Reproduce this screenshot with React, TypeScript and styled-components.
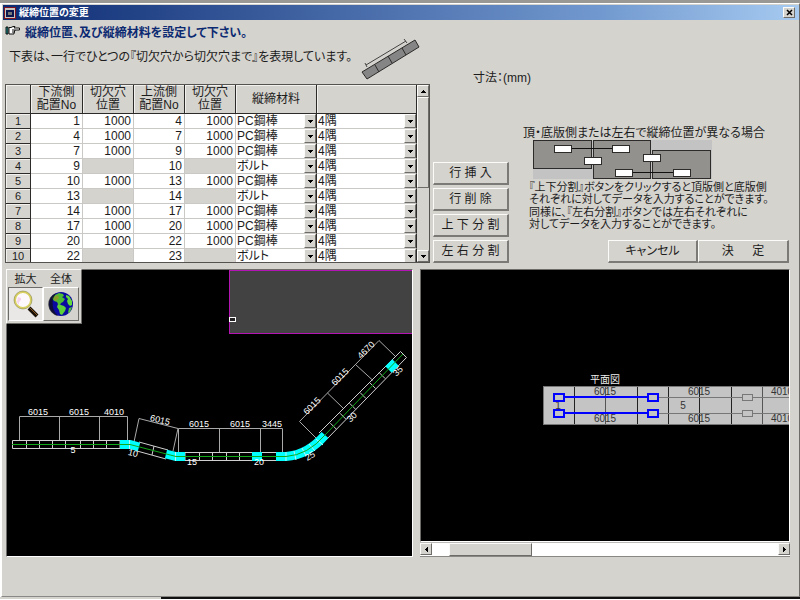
import React, { useState } from "react";
import styled, { createGlobalStyle, css } from "styled-components";

const face = "#d5d3ce";
const ink = "#1c1c1c";

const GlobalStyle = createGlobalStyle`
  *, *::before, *::after { box-sizing: border-box; }
  body {
    margin: 0;
    background: ${face};
    color: ${ink};
    font-family: "Liberation Sans", "Noto Sans CJK JP", sans-serif;
    font-size: 12px;
    font-feature-settings: "palt";
  }
  button, select { font: inherit; color: inherit; font-feature-settings: inherit; }
`;

const raised = css`
  border: 1px solid;
  border-color: #fbfbf9 #6e6c69 #6e6c69 #fbfbf9;
  background: ${face};
`;

const Screen = styled.div`
  min-height: 100vh;
  display: flex;
  flex-direction: column;
  background: #fff;
  border-top: 3px solid #9a9894;
`;

const Dialog = styled.main`
  flex: 1;
  display: flex;
  flex-direction: column;
  margin-left: 1px;
  padding: 1px 0 0 1px;
  background: ${face};
  border: 1px solid;
  border-color: #fff #6e6c69 #8a8884 #fff;
`;

const TitleBar = styled.header`
  display: flex;
  align-items: center;
  gap: 2px;
  height: 15px;
  padding: 0 4px 0 0;
  background: linear-gradient(90deg, #0c2a72, #7299cf 75%, #a6caf0);
  color: #fff;
`;

const Title = styled.h1`
  flex: 1;
  margin: 0;
  font-size: 10px;
  line-height: 15px;
  font-weight: 700;
`;

const CloseButton = styled.button`
  ${raised}
  display: grid;
  place-items: center;
  width: 12px;
  height: 11px;
  padding: 0;
`;

const TopArea = styled.div`
  display: flex;
  padding: 0 10px 6px 2px;
`;

const TableSide = styled.section`
  flex: none;
  width: 425px;
`;

const Intro = styled.div`
  display: grid;
  grid-template-columns: 356px 60px;
  grid-template-rows: 22px 30px;
  padding-bottom: 12px;
`;

const Heading = styled.h2`
  display: flex;
  align-items: center;
  gap: 4px;
  margin: 0;
  font-size: 12px;
  font-weight: 700;
  color: #0c2a72;
  white-space: nowrap;
`;

const Lead = styled.p`
  grid-column: 1;
  margin: 0;
  padding-left: 4px;
  line-height: 30px;
  white-space: nowrap;
`;

const BarSketch = styled.svg`
  grid-area: 1 / 2 / 3 / 3;
  width: 60px;
  height: 44px;
  align-self: end;
  margin-bottom: -10px;
`;

const GridFrame = styled.div`
  display: flex;
  height: 179px;
  overflow: hidden;
  border: 1px solid #55534f;
  background: ${face};
`;

const Table = styled.table`
  flex: none;
  width: 411px;
  height: 100%;
  border-collapse: separate;
  border-spacing: 0;
  table-layout: fixed;
`;

const Col = styled.col<{ $w: number }>`
  width: ${(p) => p.$w}px;
`;

const HeadCell = styled.th`
  height: 29px;
  padding: 0;
  font-weight: 400;
  line-height: 13px;
  background: ${face};
  border: solid #2c2b29;
  border-width: 0 1px 1px 0;
  box-shadow: inset 1px 1px 0 #f2f1ee;
`;

const RowHead = styled.th`
  height: 15px;
  padding: 0;
  font-size: 11px;
  font-weight: 400;
  line-height: 14px;
  background: ${face};
  border: solid #2c2b29;
  border-width: 0 1px 1px 0;
  box-shadow: inset 1px 1px 0 #f2f1ee;
`;

const Cell = styled.td<{ $off?: boolean }>`
  height: 15px;
  padding: 0 2px 0 0;
  line-height: 14px;
  text-align: right;
  background: ${(p) => (p.$off ? face : "#fff")};
  border: solid #cbc9c5;
  border-width: 0 1px 1px 0;
`;

const PickCell = styled.td`
  height: 15px;
  padding: 0;
  background: #fff;
  border: solid;
  border-width: 0 1px 1px 0;
  border-color: #cbc9c5 #2c2b29;
`;

const PickBox = styled.div`
  display: grid;
  align-items: center;
  height: 14px;
`;

const Pick = styled.select`
  grid-area: 1 / 1;
  appearance: none;
  width: 100%;
  height: 14px;
  padding: 0 14px 0 1px;
  border: 0;
  border-radius: 0;
  background: #fff;
  line-height: 14px;
`;

const PickArrow = styled.span`
  ${raised}
  grid-area: 1 / 1;
  justify-self: end;
  display: grid;
  place-items: center;
  width: 12px;
  height: 14px;
  pointer-events: none;
`;

const ScrollY = styled.div`
  flex: 1;
  display: flex;
  flex-direction: column;
  background: ${face};
`;

const ScrollX = styled.div`
  display: flex;
  height: 15px;
  background: #fff;
  border-bottom: 1px solid #8a8884;
  border-top: 1px solid #bdb9b6;
`;

const ScrollButton = styled.button`
  ${raised}
  flex: none;
  display: grid;
  place-items: center;
  width: 12px;
  height: 12px;
  padding: 0;
`;

const ThumbY = styled.div`
  ${raised}
  height: 91px;
`;

const ThumbX = styled.div`
  ${raised}
  width: 83px;
  margin-left: 17px;
`;

const Fill = styled.div`
  flex: 1;
`;

const ControlSide = styled.section`
  flex: 1;
  display: flex;
  flex-direction: column;
  justify-content: space-between;
  padding: 49px 0 0 3px;
`;

const Unit = styled.p`
  margin: 0;
  padding-left: 40px;
  line-height: 18px;
`;

const Controls = styled.div`
  display: flex;
  gap: 14px;
  align-items: flex-end;
`;

const RowActions = styled.div`
  display: grid;
  flex: none;
  gap: 3px;
  width: 76px;
`;

const PushButton = styled.button`
  height: 23px;
  padding: 0;
  border: 2px solid;
  border-width: 1px 2px 2px 1px;
  border-color: #fbfbf9 #7c7a77 #7c7a77 #fbfbf9;
  background: ${face};
  line-height: 18px;
  white-space: pre;
`;

const Info = styled.div`
  flex: 1;
`;

const InfoTitle = styled.h3`
  margin: 0;
  font-size: 12px;
  font-weight: 400;
  line-height: 14px;
  white-space: nowrap;
`;

const InfoArt = styled.svg`
  display: block;
  width: 179px;
  height: 40px;
  margin-left: 10px;
`;

const InfoText = styled.p`
  margin: 1px 0 0;
  padding-left: 6px;
  font-size: 11px;
  line-height: 12px;
  white-space: nowrap;
`;

const Decide = styled.div`
  display: grid;
  grid-template-columns: 90px 91px;
  justify-content: end;
  padding-top: 10px;
`;

const Workspace = styled.div`
  flex: 1;
  display: grid;
  grid-template-columns: 407fr 370fr;
  gap: 7px;
  padding: 0 9px 39px 3px;
`;

const Pane = styled.section`
  position: relative;
  display: flex;
  flex-direction: column;
  min-width: 0;
`;

const Canvas = styled.svg`
  flex: 1;
  display: block;
  width: 100%;
  min-height: 260px;
  background: #000;
  border: 1px solid;
  border-color: #6e6c69 #fff #fff #6e6c69;
  font-size: 9px;
`;

const Tools = styled.div`
  ${raised}
  position: absolute;
  top: 0;
  left: 0;
  display: grid;
  grid-template-columns: 35px 36px;
  grid-template-rows: 16px 34px;
  padding: 1px 2px 2px 1px;
  text-align: center;
`;

const ToolLabel = styled.label`
  font-size: 11px;
  line-height: 16px;
`;

const ToolButton = styled.button<{ $down?: boolean }>`
  display: grid;
  place-items: center;
  padding: 0;
  border: 1px solid;
  border-color: ${(p) => (p.$down ? "#6e6c69 #fff #fff #6e6c69" : "#fff #6e6c69 #6e6c69 #fff")};
  background: ${(p) => (p.$down ? "#e9e8e6" : face)};
`;

const Footer = styled.footer`
  display: flex;
  height: 3px;
  border-bottom: 1px solid #fff;
  background: linear-gradient(90deg, ${face} 161px, #111 161px);
`;

type Row = { from: number; to: number; hole: boolean };

const rows: Row[] = [
  { from: 1, to: 4, hole: true },
  { from: 4, to: 7, hole: true },
  { from: 7, to: 9, hole: true },
  { from: 9, to: 10, hole: false },
  { from: 10, to: 13, hole: true },
  { from: 13, to: 14, hole: false },
  { from: 14, to: 17, hole: true },
  { from: 17, to: 20, hole: true },
  { from: 20, to: 22, hole: true },
  { from: 22, to: 23, hole: false },
];

const arrows = {
  up: "M0 4h5v-1h-1v-1h-1v-1h-1v1h-1v1h-1z",
  down: "M0 1h5v1h-1v1h-1v1h-1v-1h-1v-1h-1z",
  left: "M4 0v5h-1v-1h-1v-1h-1v-1h1v-1h1v-1z",
  right: "M1 0v5h1v-1h1v-1h1v-1h-1v-1h-1v-1z",
};

function Arrow({ dir }: { dir: keyof typeof arrows }) {
  return (
    <svg width="5" height="5" viewBox="0 0 5 5" shapeRendering="crispEdges" aria-hidden="true">
      <path d={arrows[dir]} fill="#000" />
    </svg>
  );
}

function Dropdown({ label, value, options }: { label: string; value: string; options: string[] }) {
  return (
    <PickBox>
      <Pick aria-label={label} defaultValue={value}>
        {options.map((o) => (
          <option key={o}>{o}</option>
        ))}
      </Pick>
      <PickArrow>
        <Arrow dir="down" />
      </PickArrow>
    </PickBox>
  );
}

function DataGrid() {
  return (
    <GridFrame>
      <Table>
        <colgroup>
          {[25, 52, 51, 51, 51, 81, 100].map((w, i) => (
            <Col key={i} $w={w} />
          ))}
        </colgroup>
        <thead>
          <tr>
            <HeadCell />
            <HeadCell scope="col">下流側<br />配置No</HeadCell>
            <HeadCell scope="col">切欠穴<br />位置</HeadCell>
            <HeadCell scope="col">上流側<br />配置No</HeadCell>
            <HeadCell scope="col">切欠穴<br />位置</HeadCell>
            <HeadCell scope="col">縦締材料</HeadCell>
            <HeadCell />
          </tr>
        </thead>
        <tbody>
          {rows.map((r, i) => (
            <tr key={i}>
              <RowHead scope="row">{i + 1}</RowHead>
              <Cell>{r.from}</Cell>
              <Cell $off={!r.hole}>{r.hole ? 1000 : null}</Cell>
              <Cell>{r.to}</Cell>
              <Cell $off={!r.hole}>{r.hole ? 1000 : null}</Cell>
              <PickCell>
                <Dropdown label="縦締材料" value={r.hole ? "PC鋼棒" : "ボルト"} options={["PC鋼棒", "ボルト"]} />
              </PickCell>
              <PickCell>
                <Dropdown label="位置" value="4隅" options={["4隅"]} />
              </PickCell>
            </tr>
          ))}
        </tbody>
      </Table>
      <ScrollY>
        <ScrollButton aria-label="上へ"><Arrow dir="up" /></ScrollButton>
        <ThumbY />
        <Fill />
        <ScrollButton aria-label="下へ"><Arrow dir="down" /></ScrollButton>
      </ScrollY>
    </GridFrame>
  );
}

function HandIcon() {
  return (
    <svg width="16" height="12" viewBox="0 0 16 12" aria-hidden="true">
      <path d="M1 2h2v7h-2z" fill="#1b8f8f" stroke="#111" />
      <path d="M4 2.500h2l2-1h2l-1 1.500h5.500v2h-4.500v1h-.5v1.500h-.5v1.500h-5z" fill="#fff" stroke="#111" />
      <path d="M7 5h3M7 7h2.500" stroke="#111" />
    </svg>
  );
}

function SplitArt() {
  const boxes = [[21, 5], [51, 17], [79, 5], [110, 14], [82, 29], [140, 29]];
  return (
    <InfoArt viewBox="0 0 179 40" shapeRendering="crispEdges" aria-hidden="true">
      <rect width="179" height="39" fill="#c3c3c3" />
      <g fill="#93918e" stroke="#2c2b29">
        <rect x="0.5" y="0.500" width="58" height="28" />
        <rect x="60.5" y="0.500" width="57" height="38" />
        <rect x="119.5" y="10.500" width="58" height="28" />
      </g>
      <path d="M38 8.500h42M100 32.500h41" stroke="#111" />
      {boxes.map(([x, y]) => (
        <rect key={`${x}-${y}`} x={x + 0.5} y={y + 0.5} width="17" height="7" fill="#fff" stroke="#2c2b29" />
      ))}
    </InfoArt>
  );
}

function RouteView() {
  const diagonal = [0.13, 0.25, 0.37, 0.5, 0.62, 0.74].map((t) => [323 + 80 * t, 437 - 83 * t]);
  return (
    <Canvas aria-label="全体図">
      <g transform="translate(-7 -270)" fill="none">
        <rect x="229" y="269" width="400" height="65" fill="#b414b4" />
        <rect x="230" y="271" width="400" height="62" fill="#424242" />
        <rect x="229.500" y="317.500" width="6" height="4" stroke="#fff" fill="#222" />

        <g stroke="#a9a9a9">
          <path d="M19.500 440V416.500H127.500V440M59.500 416.500V440M99.500 416.500V440" />
          <path d="M134 442L139 418.500L178 428.500L173 451" />
          <path d="M178.500 452V428.500H282.500V452M219.500 428.500V452M260.500 428.500V452" />
          <path d="M316 438L299.500 421.500L379 340.500L395 356M327.500 393L344 409M355.500 364.500L373 380.500" />
        </g>

        <g stroke="#d0d0d0">
          <path d="M12.500 440.500H120V448.500H12.500zM26.500 440V448M39.500 440V448M52.500 440V448M65.500 440V448M80.500 440V448M93.500 440V448M106.500 440V448" />
          <path d="M139 442L168 450M137 451L166 459M154 446L152 455" />
          <path d="M185 452.500H277V460.500H185zM199.500 452V460M212.500 452V460M226.500 452V460M239.500 452V460" />
          <path d="M319 433L400.500 351.500L406.500 357.500L326 440" />
          {diagonal.map(([x, y]) => (
            <path key={x} d={`M${x - 3} ${y - 3}l6 6`} />
          ))}
        </g>

        <g stroke="#0ff" strokeWidth="9">
          <path d="M120 444.500H130L139 447M166 454L176 456.500H185M252 456.500H262M276 456.500H286Q308 455 325 435" />
          <path d="M388.500 369.500L395.500 362.500" />
        </g>
        <path d="M129.500 440V449M175.500 452V461M286 452V461M294 451L296 460M302 448L306 456M309 444L315 451M316 439L323 445" stroke="#b8f4f4" />
        <path d="M12 444.500H130L176 456.500H286Q308 455 325 435L403 354" stroke="#10a818" />

        <g fill="#fff" textAnchor="middle">
          <text x="38" y="415">6015</text>
          <text x="79" y="415">6015</text>
          <text x="114" y="415">4010</text>
          <text x="160" y="423" transform="rotate(14 160 420)">6015</text>
          <text x="199" y="427">6015</text>
          <text x="240" y="427">6015</text>
          <text x="272" y="427">3445</text>
          <text x="312" y="409" transform="rotate(-45 312 406)">6015</text>
          <text x="340" y="380" transform="rotate(-45 340 377)">6015</text>
          <text x="366" y="353" transform="rotate(-45 366 350)">4670</text>
          <text x="73" y="453">5</text>
          <text x="133" y="456" transform="rotate(14 133 453)">10</text>
          <text x="192" y="465">15</text>
          <text x="259" y="465">20</text>
          <text x="310" y="459" transform="rotate(-30 310 456)">25</text>
          <text x="352" y="420" transform="rotate(-45 352 417)">30</text>
          <text x="398" y="374" transform="rotate(-45 398 371)">35</text>
        </g>
      </g>
    </Canvas>
  );
}

function PlanView() {
  return (
    <Canvas aria-label="平面図">
      <g transform="translate(-421 -270)" fill="none">
        <rect x="543.500" y="386.500" width="400" height="38" fill="#c4c4c4" stroke="#777" />
        <path d="M574.500 387V424M637.500 387V424M668.500 387V424M699.500 387V424M731.500 387V424" stroke="#222" />
        <path d="M605.500 387V424M762.500 387V424" stroke="#555" />
        <path d="M658 397.500H742M658 413.500H742M752 397.500H920M752 413.500H920" stroke="#777" />
        <g fill="#c4c4c4" stroke="#777">
          <rect x="742.500" y="394.500" width="10" height="6" />
          <rect x="742.500" y="410.500" width="10" height="6" />
        </g>
        <g fill="#333" textAnchor="middle" fontSize="10">
          <text x="605" y="395">6015</text>
          <text x="699" y="395">6015</text>
          <text x="782" y="395">4010</text>
          <text x="605" y="422">6015</text>
          <text x="699" y="422">6015</text>
          <text x="782" y="422">4010</text>
          <text x="558" y="409">1</text>
          <text x="683" y="409">5</text>
        </g>
        <g stroke="#00f" strokeWidth="2" fill="#c4c4c4">
          <path d="M564 397H649M564 413H649" />
          <rect x="554" y="394" width="10" height="7" />
          <rect x="648" y="394" width="10" height="7" />
          <rect x="554" y="410" width="10" height="7" />
          <rect x="648" y="410" width="10" height="7" />
        </g>
        <text x="605" y="383" fill="#eee" textAnchor="middle" fontSize="10">平面図</text>
      </g>
    </Canvas>
  );
}

function LensIcon() {
  return (
    <svg width="28" height="28" viewBox="0 0 28 28" aria-hidden="true">
      <path d="M17 18l8 8" stroke="#1a1208" strokeWidth="4" />
      <path d="M18 18l7 7" stroke="#8a5a22" strokeWidth="1" />
      <circle cx="11" cy="10" r="8" fill="#fdf8fb" stroke="#d8d060" strokeWidth="2" />
      <circle cx="11" cy="10" r="9" fill="none" stroke="#77743a" strokeWidth="0.5" />
      <path d="M6 7l3 1v2l-2 2v3l-2-3z" fill="#f6d4ee" />
    </svg>
  );
}

function GlobeIcon() {
  return (
    <svg width="26" height="26" viewBox="0 0 26 26" aria-hidden="true">
      <circle cx="13" cy="13" r="12" fill="#0a0aa0" />
      <path d="M7 4l4-2 4 1 1 2-2 1 3 2-2 3-2 1-1 2-2-1-1-2-3-1-2-3z" fill="#4dbb33" />
      <path d="M10 13l3 1 3 1 2 2-1 3-3 4-2-1-1-4-2-3z" fill="#5ed03a" />
      <path d="M18 4l3 1 3 5 0 4-2 1-2-2-1-3 1-2-2-2z" fill="#63d83c" />
      <path d="M21 17l3-1-2 5-2 1z" fill="#52c838" />
      <path d="M8 2A12 12 0 0 0 10 25Q3 18 5 8z" fill="#101018" fillOpacity="0.75" />
      <path d="M6 6l4-2 1 3-3 3-2-1z" fill="#8b9a2c" />
    </svg>
  );
}

export default function App() {
  const [tool, setTool] = useState<"zoom" | "all">("zoom");
  return (
    <Screen lang="ja">
      <GlobalStyle />
      <Dialog>
        <TitleBar>
          <svg width="14" height="14" viewBox="0 0 14 14" shapeRendering="crispEdges" aria-hidden="true">
            <rect x="1.500" y="1.500" width="11" height="11" fill="#c9c6c2" stroke="#7d1420" />
            <rect x="4" y="5" width="6" height="5" fill="#777" stroke="#0b1550" strokeWidth="2" />
          </svg>
          <Title>縦締位置の変更</Title>
          <CloseButton aria-label="閉じる">
            <svg width="7" height="7" viewBox="0 0 7 7" aria-hidden="true">
              <path d="M1 1l5 5M6 1l-5 5" stroke="#000" strokeWidth="1.500" />
            </svg>
          </CloseButton>
        </TitleBar>

        <TopArea>
          <TableSide>
            <Intro>
              <Heading>
                <HandIcon />
                縦締位置、及び縦締材料を設定して下さい。
              </Heading>
              <Lead>下表は、一行でひとつの『切欠穴から切欠穴まで』を表現しています。</Lead>
              <BarSketch viewBox="0 0 60 44" aria-hidden="true">
                <path d="M1 34L54 2l4 7L6 41z" fill="#858585" stroke="#2c2b29" />
                <path d="M14 27l4 7M27 18l4 7M41 10l4 7" stroke="#2c2b29" />
                <path d="M5 27L45 3M4 25l2 4M43 1l3 4" stroke="#444" />
              </BarSketch>
            </Intro>
            <DataGrid />
          </TableSide>

          <ControlSide>
            <Unit>寸法：(mm)</Unit>
            <Controls>
              <RowActions>
                <PushButton>行 挿 入</PushButton>
                <PushButton>行 削 除</PushButton>
                <PushButton>上 下 分 割</PushButton>
                <PushButton>左 右 分 割</PushButton>
              </RowActions>
              <Info>
                <InfoTitle>頂・底版側または左右で縦締位置が異なる場合</InfoTitle>
                <SplitArt />
                <InfoText>
                  『上下分割』ボタンをクリックすると頂版側と底版側
                  <br />
                  それぞれに対してデータを入力することができます。
                </InfoText>
                <InfoText>
                  同様に、『左右分割』ボタンでは左右それぞれに
                  <br />
                  対してデータを入力することができます。
                </InfoText>
                <Decide>
                  <PushButton>キャンセル</PushButton>
                  <PushButton>決　  定</PushButton>
                </Decide>
              </Info>
            </Controls>
          </ControlSide>
        </TopArea>

        <Workspace>
          <Pane>
            <RouteView />
            <Tools>
              <ToolLabel htmlFor="tool-zoom">拡大</ToolLabel>
              <ToolLabel htmlFor="tool-all">全体</ToolLabel>
              <ToolButton id="tool-zoom" $down={tool === "zoom"} aria-pressed={tool === "zoom"} onClick={() => setTool("zoom")}>
                <LensIcon />
              </ToolButton>
              <ToolButton id="tool-all" $down={tool === "all"} aria-pressed={tool === "all"} onClick={() => setTool("all")}>
                <GlobeIcon />
              </ToolButton>
            </Tools>
          </Pane>
          <Pane>
            <PlanView />
            <ScrollX>
              <ScrollButton aria-label="左へ"><Arrow dir="left" /></ScrollButton>
              <ThumbX />
              <Fill />
              <ScrollButton aria-label="右へ"><Arrow dir="right" /></ScrollButton>
            </ScrollX>
          </Pane>
        </Workspace>
      </Dialog>
      <Footer />
    </Screen>
  );
}
